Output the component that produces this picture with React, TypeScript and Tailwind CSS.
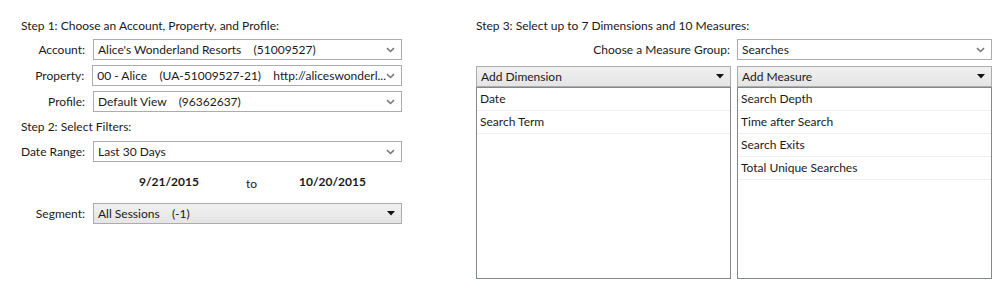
const Chevron = () => (
  <svg width="9" height="6" viewBox="0 0 9 6" className="shrink-0">
    <path d="M1 1.2 L4.5 4.5 L8 1.2" fill="none" stroke="#7a7a7a" strokeWidth="1.6" />
  </svg>
);

const Triangle = () => (
  <svg width="8" height="5" viewBox="0 0 8 5" className="shrink-0">
    <path d="M0 0 H8 L4 4.5 Z" fill="#111" />
  </svg>
);

function TextCombo({ value }: { value: string }) {
  return (
    <div className="flex-1 h-[21px] border border-[#acacac] bg-white flex items-center pl-[4px] pr-[6px]">
      <span className="flex-1 whitespace-pre truncate">{value}</span>
      <Chevron />
    </div>
  );
}

function ButtonCombo({ value, className = '' }: { value: string; className?: string }) {
  return (
    <div
      className={`h-[21px] border border-[#acacac] bg-gradient-to-b from-[#f0f0f0] to-[#e5e5e5] flex items-center pl-[4px] pr-[6px] ${className}`}
    >
      <span className="flex-1 whitespace-pre truncate">{value}</span>
      <Triangle />
    </div>
  );
}

function Row({ label, children }: { label: string; children: React.ReactNode }) {
  return (
    <div className="flex items-center">
      <div className="w-[64px] text-right mr-[8px] whitespace-nowrap">{label}</div>
      {children}
    </div>
  );
}

function ListPanel({ title, items }: { title: string; items: string[] }) {
  return (
    <div className="flex-1 flex flex-col">
      <ButtonCombo value={title} />
      <div className="h-[192px] border border-[#828790] bg-white">
        {items.map((it) => (
          <div key={it} className="h-[23px] flex items-center pl-[3px] border-b border-[#f0f0f0]">
            {it}
          </div>
        ))}
      </div>
    </div>
  );
}

export default function App() {
  return (
    <div
      className="w-[1001px] h-[288px] bg-white text-[12px] text-[#1a1a1a] flex"
      style={{ fontFamily: 'Lato, sans-serif' }}
    >
      <div className="w-[381px] ml-[21px] pt-[18px] flex flex-col">
        <div className="h-[16px] leading-[16px]">Step 1: Choose an Account, Property, and Profile:</div>
        <div className="mt-[5px] flex flex-col gap-[5px]">
          <Row label="Account:">
            <TextCombo value="Alice's Wonderland Resorts    (51009527)" />
          </Row>
          <Row label="Property:">
            <TextCombo value="00 - Alice    (UA-51009527-21)    http://aliceswonderl..." />
          </Row>
          <Row label="Profile:">
            <TextCombo value="Default View    (96362637)" />
          </Row>
        </div>
        <div className="mt-[7px] h-[16px] leading-[16px]">Step 2: Select Filters:</div>
        <div className="mt-[6px]">
          <Row label="Date Range:">
            <TextCombo value="Last 30 Days" />
          </Row>
        </div>
        <div className="mt-[12px] h-[16px] flex items-center">
          <span className="ml-[118px] font-bold">9/21/2015</span>
          <span className="ml-[47px] mt-[4px]">to</span>
          <span className="ml-[42px] font-bold">10/20/2015</span>
        </div>
        <div className="mt-[13px]">
          <Row label="Segment:">
            <ButtonCombo value="All Sessions    (-1)" className="flex-1" />
          </Row>
        </div>
      </div>

      <div className="ml-[74px] w-[516px] pt-[18px] flex flex-col">
        <div className="h-[16px] leading-[16px]">Step 3: Select up to 7 Dimensions and 10 Measures:</div>
        <div className="mt-[5px] flex items-center">
          <div className="flex-1 text-right mr-[7px]">Choose a Measure Group:</div>
          <div className="w-[255px] flex">
            <TextCombo value="Searches" />
          </div>
        </div>
        <div className="mt-[6px] flex gap-[6px]">
          <ListPanel title="Add Dimension" items={['Date', 'Search Term']} />
          <ListPanel
            title="Add Measure"
            items={['Search Depth', 'Time after Search', 'Search Exits', 'Total Unique Searches']}
          />
        </div>
      </div>
    </div>
  );
}
